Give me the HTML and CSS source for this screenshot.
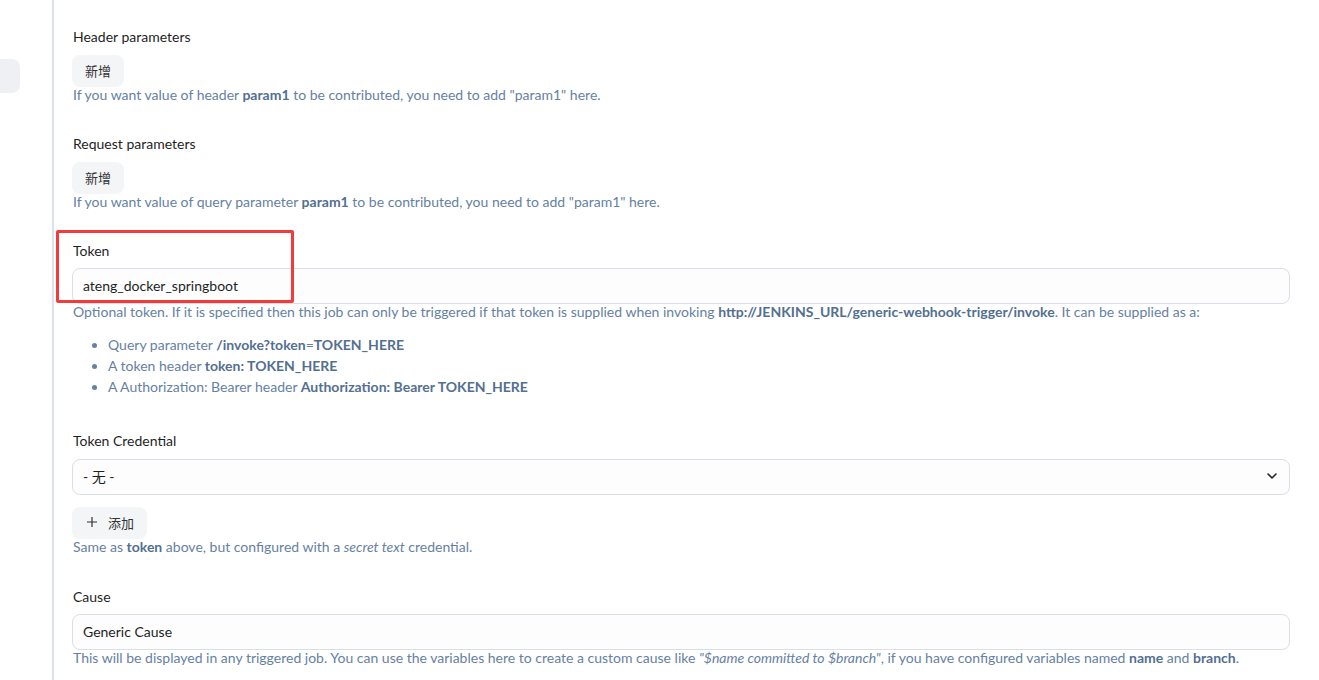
FILE: index.html
```html
<!DOCTYPE html>
<html lang="zh-CN">
<head>
    <meta charset="UTF-8">
    <title>Generic Webhook Trigger</title>
    <link rel="stylesheet" href="styles.css">
</head>
<body>
    <div class="side">
        <div class="side-item"></div>
    </div>

    <div class="config">
        <!-- Header parameters -->
        <div class="section">
            <div class="label">Header parameters</div>
            <button class="btn" type="button">新增</button>
            <div class="help">If you want value of header <b>param1</b> to be contributed, you need to add "param1" here.</div>
        </div>

        <!-- Request parameters -->
        <div class="section">
            <div class="label">Request parameters</div>
            <button class="btn" type="button">新增</button>
            <div class="help">If you want value of query parameter <b>param1</b> to be contributed, you need to add "param1" here.</div>
        </div>

        <!-- Token -->
        <div class="section token">
            <div class="highlight"></div>
            <div class="label label-field">Token</div>
            <input class="field" type="text" value="ateng_docker_springboot">
            <div class="help">
                Optional token. If it is specified then this job can only be triggered if that token is supplied when invoking <b>http://JENKINS_URL/generic-webhook-trigger/invoke</b>. It can be supplied as a:
                <ul>
                    <li>Query parameter <b>/invoke?token</b>=<b>TOKEN_HERE</b></li>
                    <li>A token header <b>token: TOKEN_HERE</b></li>
                    <li>A Authorization: Bearer header <b>Authorization: Bearer TOKEN_HERE</b></li>
                </ul>
            </div>
        </div>

        <!-- Token Credential -->
        <div class="section">
            <div class="label">Token Credential</div>
            <div class="select">
                <span>- 无 -</span>
                <svg width="14" height="14" viewBox="0 0 14 14"><path d="M3 5l4 4 4-4" fill="none" stroke="#222" stroke-width="1.6" stroke-linecap="round" stroke-linejoin="round"/></svg>
            </div>
            <button class="btn btn-add" type="button">
                <svg width="12" height="12" viewBox="0 0 12 12"><path d="M6 1v10M1 6h10" stroke="#333" stroke-width="1.2"/></svg>
                添加
            </button>
            <div class="help">Same as <b>token</b> above, but configured with a <i>secret text</i> credential.</div>
        </div>

        <!-- Cause -->
        <div class="section cause">
            <div class="label label-field">Cause</div>
            <input class="field" type="text" value="Generic Cause">
            <div class="help">This will be displayed in any triggered job. You can use the variables here to create a custom cause like <i>"$name committed to $branch"</i>, if you have configured variables named <b>name</b> and <b>branch</b>.</div>
        </div>
    </div>
</body>
</html>
```

FILE: styles.css
```css
/* Basic styling */
body {
    font-family: Lato, "Noto Sans", "Noto Sans CJK SC", sans-serif;
    margin: 0;
    padding: 0;
    background-color: #fff;
    color: #1f1f1f;
    display: flex;
    min-height: 680px;
    overflow: hidden;
}

/* Left side */
.side {
    width: 52px;
    flex-shrink: 0;
    border-right: 2px solid #dde1ea;
    padding-top: 59px;
}
.side-item {
    width: 20px;
    height: 34px;
    background-color: #eef0f4;
    border-radius: 0 8px 8px 0;
}

/* Config form */
.config {
    flex: 1;
    padding: 27px 29px 0 18px;
}
.section {
    margin-bottom: 31px;
}
.token {
    position: relative;
    margin-bottom: 34px;
}
.cause {
    padding-top: 1px;
}
.label {
    font-size: 14px;
    line-height: 20px;
    margin-bottom: 8px;
    padding-left: 1px;
}
.label-field {
    margin-bottom: 7px;
}
.btn {
    font-family: inherit;
    font-size: 13px;
    color: #333;
    background-color: #f4f5f7;
    border: none;
    border-radius: 8px;
    height: 32px;
    padding: 0 13px 2px;
    display: flex;
    align-items: center;
    gap: 9px;
    cursor: pointer;
}
.btn-add {
    margin-top: 12px;
    padding: 0 13px 2px 14px;
    gap: 10px;
}
.help {
    font-size: 14px;
    line-height: 16px;
    color: #6681a3;
    padding-left: 1px;
}
.help b {
    color: #536f91;
}
.help ul {
    margin: 14px 0 0;
    padding-left: 35px;
    line-height: 21px;
}

/* Inputs */
.field, .select {
    box-sizing: border-box;
    width: 100%;
    height: 36px;
    border: 1px solid #dadee7;
    border-radius: 8px;
    background-color: #fdfdfe;
    font-family: inherit;
    font-size: 14px;
    color: #1f1f1f;
    padding: 0 10px 2px;
    outline: none;
}
.select {
    display: flex;
    align-items: center;
    justify-content: space-between;
}

/* Red annotation box */
.highlight {
    position: absolute;
    left: -16px;
    top: -11px;
    width: 238px;
    height: 73px;
    box-sizing: border-box;
    border: 3px solid #f23b3b;
    border-radius: 2px;
    pointer-events: none;
}
```
